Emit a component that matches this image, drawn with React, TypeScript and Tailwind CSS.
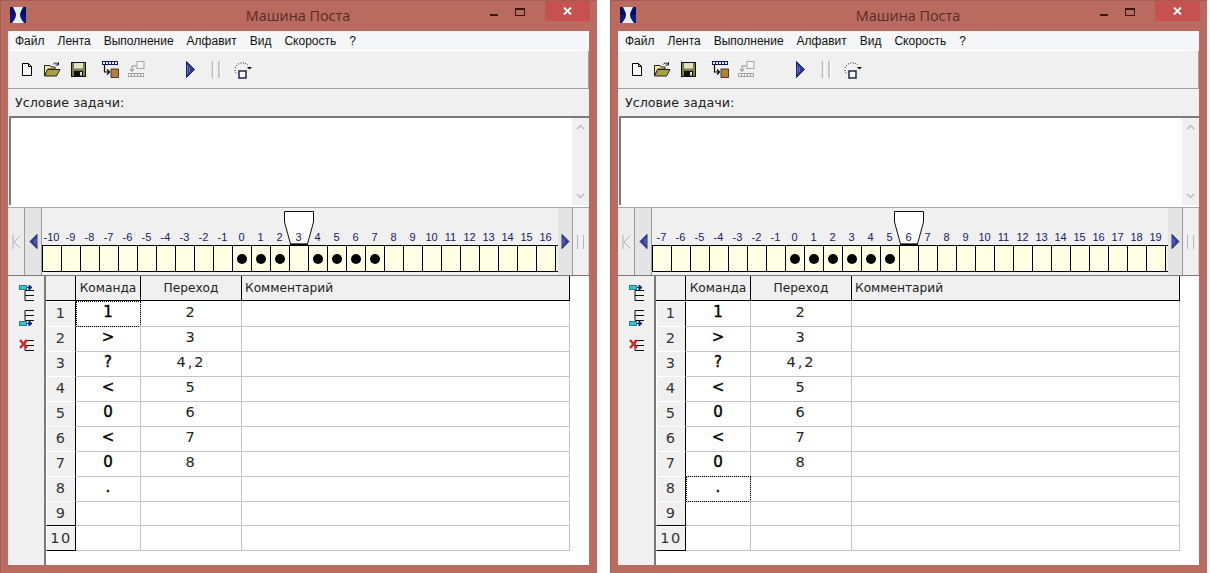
const MENU = ["Файл", "Лента", "Выполнение", "Алфавит", "Вид", "Скорость", "?"];
const ROWS = [
  ["1", "2"],
  [">", "3"],
  ["?", "4,2"],
  ["<", "5"],
  ["0", "6"],
  ["<", "7"],
  ["0", "8"],
  [".", ""],
  ["", ""],
  ["", ""],
];

function AppIcon() {
  return (
    <svg width="16" height="16" viewBox="0 0 16 16">
      <rect width="16" height="16" fill="#0a1a80" />
      <rect x="0" y="0" width="16" height="8" fill="#061060" />
      <path d="M3 0H13C12 3 10 5 10 8C10 11 12 13 14 16H2C4 13 6 11 6 8C6 5 4 3 3 0Z" fill="#e8eef5" />
    </svg>
  );
}

function NewIcon() {
  return (
    <svg width="12" height="15" viewBox="0 0 12 15" className="ml-[13px]">
      <path d="M1.5 1.5H7.5L10.5 4.5V13.5H1.5Z M7.5 1.5V4.5H10.5" fill="#fff" stroke="#000" />
    </svg>
  );
}

function OpenIcon() {
  return (
    <svg width="17" height="15" viewBox="0 0 17 15" className="ml-[11px]">
      <path d="M0.5 3.5H6L7 5H11V7H4L0.5 14Z" fill="#f3ee9c" stroke="#222" />
      <path d="M0.5 14L3.5 7.5H16L12.5 14Z" fill="#a8a043" stroke="#222" />
      <path d="M9 2.5C10 0.8 12.5 0.5 14 2M14.5 0V3H11.5" fill="none" stroke="#222" />
    </svg>
  );
}

function SaveIcon() {
  return (
    <svg width="15" height="15" viewBox="0 0 15 15" className="ml-[10px]">
      <rect x="0.5" y="0.5" width="14" height="14" fill="#7d7d45" stroke="#111" />
      <rect x="3" y="1" width="9" height="5.5" fill="#dfe0c8" />
      <rect x="3" y="9" width="9" height="5.5" fill="#111" />
      <rect x="9" y="10" width="2" height="3.5" fill="#ddd" />
    </svg>
  );
}

function TapeInIcon() {
  return (
    <svg width="17" height="17" viewBox="0 0 17 17" className="ml-[16px]">
      <rect x="0" y="0" width="16" height="1" fill="#0b1a6a" />
      <path d="M0.5 0V3.5M3.5 0V3.5M6.5 0V3.5M9.5 0V3.5M12.5 0V3.5M15.5 0V3.5" stroke="#0b1a6a" />
      <rect x="0" y="3" width="16" height="1" fill="#0b1a6a" />
      <path d="M2.5 4V11H7M5 8.5L7.5 11L5 13.5" fill="none" stroke="#000" strokeWidth="1.2" />
      <rect x="9" y="8" width="7.5" height="8.5" fill="#b5813a" stroke="#222" strokeWidth="0.8" />
    </svg>
  );
}

function TapeOutIcon() {
  return (
    <svg width="17" height="17" viewBox="0 0 17 17" className="ml-[9px]">
      <rect x="9" y="0.5" width="7" height="7" fill="#f5f5f5" stroke="#a5a5a5" />
      <path d="M8 5H4V10M2 8L4 10.5L6 8" fill="none" stroke="#8d8d8d" />
      <rect x="0" y="12" width="16" height="1" fill="#a5a5a5" />
      <rect x="0" y="15" width="16" height="1" fill="#a5a5a5" />
      <path d="M0.5 12V16M3.5 12V16M6.5 12V16M9.5 12V16M12.5 12V16M15.5 12V16" stroke="#a5a5a5" />
    </svg>
  );
}

function PlayIcon({ flip = false, small = false }: { flip?: boolean; small?: boolean }) {
  return (
    <svg width="9" height={small ? 15 : 17} viewBox="0 0 9 17" className={flip ? "-scale-x-100" : ""}>
      <path d="M0.5 0.5L8.5 8.5L0.5 16.5Z" fill="#2e3a92" stroke="#1a2266" />
      <path d="M1.5 4V13M3.5 6V11" stroke="#6a74c0" />
    </svg>
  );
}

function PauseIcon() {
  return (
    <svg width="10" height="17" viewBox="0 0 10 17" className="ml-[16px]">
      <path d="M1.5 0V17M8 0V17" stroke="#b9b9b9" strokeWidth="1.5" />
      <path d="M3 0V17M9.5 0V17" stroke="#fff" />
    </svg>
  );
}

function LoopIcon() {
  return (
    <svg width="18" height="18" viewBox="0 0 18 18" className="ml-[13px]">
      <path d="M1 7C3 2 9 0 14 4" fill="none" stroke="#222" strokeDasharray="1 1.5" />
      <path d="M1 9C1 11 2 12 3 13" fill="none" stroke="#222" strokeDasharray="1 1.5" />
      <path d="M13 6H18L15.5 8.5Z" fill="#111" />
      <rect x="5" y="10" width="7" height="7" fill="#fff" stroke="#10144c" strokeWidth="1.4" />
    </svg>
  );
}

function RowIcon({ kind }: { kind: "above" | "below" | "del" }) {
  const lines =
    kind === "below" ? (
      <path d="M6 0.5H15M6 0.5V10.5M6 5.5H15M6 10.5H15" stroke="#111" fill="none" />
    ) : (
      <path d="M6 5.5H15M6 5.5V15.5M6 10.5H15M6 15.5H15" stroke="#111" fill="none" />
    );
  return (
    <svg width="16" height="16" viewBox="0 0 16 16">
      {lines}
      {kind === "del" ? (
        <path d="M1 5L8 13M8 5L1 13" stroke="#d0282c" strokeWidth="2.4" />
      ) : (
        <g transform={kind === "below" ? "translate(0 11)" : "translate(0 0)"}>
          <rect x="0.5" y="0.5" width="7" height="4" fill="#35c4c8" stroke="#1f7f95" />
          <path d="M8 2.5H11M10 0L13 2.5L10 5Z" fill="#10207a" stroke="#10207a" />
        </g>
      )}
    </svg>
  );
}

function ScrollArrow({ up }: { up: boolean }) {
  return (
    <svg width="9" height="6" viewBox="0 0 9 6">
      <path d={up ? "M1 5L4.5 1.5L8 5" : "M1 1L4.5 4.5L8 1"} fill="none" stroke="#bdbdbd" strokeWidth="1.5" />
    </svg>
  );
}

function Tape({ start, dots }: { start: number; dots: number[] }) {
  const cells = Array.from({ length: 27 }, (_, i) => start + i);
  return (
    <div className="relative flex h-[68px] bg-[#f0f0f0] border-t border-[#a8a8a8]">
      <div className="flex h-full w-[17px] items-center justify-center bg-[#ececec] border-r border-[#9a9a9a]">
        <svg width="9" height="14" viewBox="0 0 9 14">
          <path d="M1 0V14M8.5 0.5L2 7L8.5 13.5" fill="none" stroke="#b0b0b0" />
        </svg>
      </div>
      <div className="flex h-full w-[17px] items-center justify-center bg-[#e4e4e4] border-r border-[#9a9a9a]">
        <PlayIcon flip small />
      </div>
      <div className="flex w-[516px] flex-col">
        <div className="flex h-[37px] items-end pb-[1px]">
          {cells.map((n) => (
            <div key={n} className="w-[19px] shrink-0 text-center text-[11px] leading-[14px] text-[#181a66] font-['Liberation_Sans',sans-serif]">
              {n}
            </div>
          ))}
        </div>
        <div className="flex h-[27px] border-y border-l border-black">
          {cells.map((n) => (
            <div key={n} className="flex w-[19px] shrink-0 items-center justify-center border-r border-black bg-[#ffffe3]">
              {dots.includes(n) && <div className="size-[10px] rounded-full bg-black" />}
            </div>
          ))}
        </div>
      </div>
      <div className="flex h-full w-[15px] items-center justify-center bg-[#e4e4e4] border-r border-[#9a9a9a]">
        <PlayIcon small />
      </div>
      <div className="flex h-full w-[16px] items-center justify-center border-r border-[#d0d0d0]">
        <svg width="9" height="14" viewBox="0 0 9 14">
          <path d="M1.5 0V14M7.5 0V14" stroke="#b8b8b8" />
        </svg>
      </div>
      <svg width="32" height="35" viewBox="0 0 32 35" className="absolute left-[275px] top-[3px]">
        <path d="M1.5 0.5H30.5V11L24.5 33H7.5L1.5 11Z" fill="#fdfdfd" stroke="#111" />
        <path d="M7 33.5H25" stroke="#000" strokeWidth="1.5" />
      </svg>
      <div className="absolute left-[281px] top-[22px] w-[19px] text-center text-[11px] leading-[14px] text-[#181a66] font-['Liberation_Sans',sans-serif]">
        {start + 13}
      </div>
    </div>
  );
}

function Grid({ focusRow }: { focusRow: number }) {
  const headCell = "flex items-center justify-center bg-[#f0f0f0] border-r border-b border-black";
  return (
    <div className="flex-1 border-l-2 border-[#7a7a7a] bg-white">
      <div className="grid grid-cols-[30px_65px_101px_328px] h-[25px] font-['DejaVu_Sans',sans-serif] text-[12.2px] text-[#222]">
        <div className={headCell} />
        <div className={headCell}>Команда</div>
        <div className={headCell}>Переход</div>
        <div className="flex items-center bg-[#f0f0f0] border-r border-b border-black pl-[3px]">Комментарий</div>
      </div>
      {ROWS.map(([cmd, next], i) => (
        <div key={i} className="grid grid-cols-[30px_65px_101px_328px] h-[25px] font-['DejaVu_Sans',sans-serif] text-[#222]">
          <div className="flex items-center justify-center bg-[#f0f0f0] border-t border-l border-t-white border-l-white border-r border-b border-r-black border-b-black text-[14.5px] tracking-[1.5px] text-[#333]">
            {i + 1}
          </div>
          <div
            className={
              i === focusRow
                ? "flex items-center justify-center border-r border-b border-[#c4c4c4] pb-[2px] text-[15px] text-black [-webkit-text-stroke:0.4px_black] outline-1 outline-dotted -outline-offset-1 outline-black"
                : "flex items-center justify-center border-r border-b border-[#c4c4c4] pb-[2px] text-[15px] text-black [-webkit-text-stroke:0.4px_black]"
            }
          >
            {cmd}
          </div>
          <div className="flex items-center justify-center border-r border-b border-[#c4c4c4] text-[14.5px] tracking-[2px]">{next}</div>
          <div className="border-r border-b border-[#c4c4c4]" />
        </div>
      ))}
    </div>
  );
}

function PostWindow({ start, dots, focusRow }: { start: number; dots: number[]; focusRow: number }) {
  return (
    <div className="flex h-[573px] w-[597px] shrink-0 flex-col bg-[#b96b60] border-t border-l border-[#a55c52]">
      <div className="grid h-[30px] shrink-0 grid-cols-[1fr_auto_1fr] pr-[7px]">
        <div className="pl-[9px] pt-[6px]">
          <AppIcon />
        </div>
        <div className="pl-[5px] pt-[5px] text-[14.4px] leading-[19px] text-[#5b2a27] font-['Open_Sans',sans-serif]">Машина Поста</div>
        <div className="flex justify-end">
          <div className="mt-[13px] mr-[17px] h-[2px] w-[8px] bg-[#3a1512]" />
          <div className="mt-[7px] mr-[20px] h-[8px] w-[10px] border border-t-2 border-[#3a1512]" />
          <div className="flex h-[20px] w-[45px] items-center justify-center bg-[#c75050] text-white">
            <svg width="9" height="8" viewBox="0 0 9 8">
              <path d="M1 0.5L8 7.5M8 0.5L1 7.5" stroke="#fff" strokeWidth="1.8" />
            </svg>
          </div>
        </div>
      </div>

      <div className="ml-[7px] mr-[8px] mb-[8px] flex flex-1 flex-col bg-[#f0f0f0]">
        <div className="flex h-[20px] items-center gap-[13px] bg-[#f5f6f7] pl-[7px] border-b border-white text-[12px] text-[#111] font-['Liberation_Sans',sans-serif]">
          {MENU.map((m) => (
            <span key={m}>{m}</span>
          ))}
        </div>
        <div className="flex h-[38px] items-center border-b border-r border-[#a0a0a0]">
          <NewIcon />
          <OpenIcon />
          <SaveIcon />
          <TapeInIcon />
          <TapeOutIcon />
          <div className="ml-[41px]">
            <PlayIcon />
          </div>
          <PauseIcon />
          <LoopIcon />
        </div>
        <div className="flex h-[27px] items-center pl-[7px] pt-[1px] text-[12.7px] text-[#222] font-['DejaVu_Sans',sans-serif]">Условие задачи:</div>
        <div className="ml-[1px] flex h-[89px] border-t-2 border-l-2 border-[#7a7a7a] bg-white">
          <div className="flex-1" />
          <div className="flex w-[17px] flex-col items-center justify-between bg-[#f0f0f0] py-[6px]">
            <ScrollArrow up />
            <ScrollArrow up={false} />
          </div>
        </div>
        <div className="h-[2px] bg-white" />
        <Tape start={start} dots={dots} />
        <div className="flex flex-1 border-t border-[#7a7a7a]">
          <div className="flex w-[36px] flex-col items-center gap-[9px] pl-[2px] pt-[9px]">
            <RowIcon kind="above" />
            <RowIcon kind="below" />
            <RowIcon kind="del" />
          </div>
          <Grid focusRow={focusRow} />
        </div>
      </div>
    </div>
  );
}

export default function App() {
  return (
    <div className="flex h-[573px] w-[1210px] gap-[13px] overflow-hidden bg-white">
      <PostWindow start={-10} dots={[0, 1, 2, 4, 5, 6, 7]} focusRow={0} />
      <PostWindow start={-7} dots={[0, 1, 2, 3, 4, 5]} focusRow={7} />
    </div>
  );
}
